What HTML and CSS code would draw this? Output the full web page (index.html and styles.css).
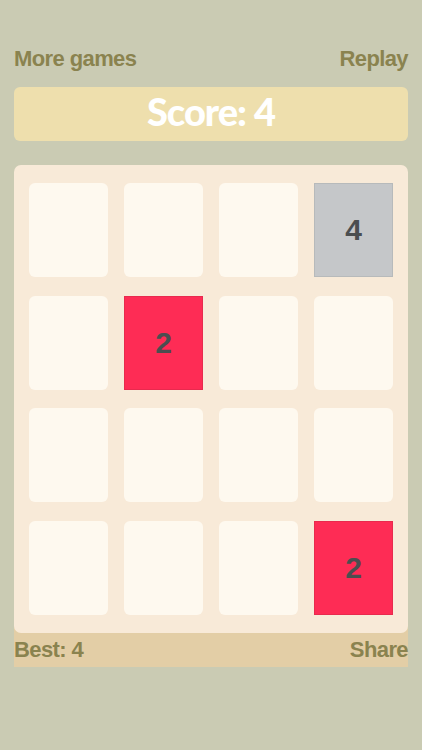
FILE: index.html
```html
<!DOCTYPE html>
<html lang="en">
<head>
    <meta charset="UTF-8">
    <meta name="viewport" content="width=device-width, initial-scale=1.0">
    <title>2048</title>
    <link rel="stylesheet" href="styles.css">
</head>
<body>
    <div class="top-bar">
        <a class="link" href="#">More games</a>
        <a class="link" href="#">Replay</a>
    </div>

    <div class="score">Score: 4</div>

    <div class="board">
        <div class="cell"></div>
        <div class="cell"></div>
        <div class="cell"></div>
        <div class="cell tile tile-4">4</div>

        <div class="cell"></div>
        <div class="cell tile tile-2">2</div>
        <div class="cell"></div>
        <div class="cell"></div>

        <div class="cell"></div>
        <div class="cell"></div>
        <div class="cell"></div>
        <div class="cell"></div>

        <div class="cell"></div>
        <div class="cell"></div>
        <div class="cell"></div>
        <div class="cell tile tile-2">2</div>
    </div>

    <div class="bottom-bar">
        <span class="link">Best: 4</span>
        <a class="link" href="#">Share</a>
    </div>
</body>
</html>
```

FILE: styles.css
```css
* {
    margin: 0;
    padding: 0;
    box-sizing: border-box;
}

body {
    font-family: 'Liberation Sans', Arial, sans-serif;
    background: #cacbb3;
    min-height: 100vh;
    padding: 46px 14px 0;
}

.top-bar,
.bottom-bar {
    display: flex;
    justify-content: space-between;
    align-items: center;
}

.top-bar {
    height: 26px;
    line-height: 26px;
}

.link {
    color: #8a834f;
    font-weight: bold;
    font-size: 22px;
    letter-spacing: -0.6px;
    text-decoration: none;
}

.score {
    margin-top: 15px;
    height: 54px;
    line-height: 48px;
    padding-bottom: 6px;
    background: #eedfad;
    border-radius: 6px;
    color: white;
    text-align: center;
    font-family: Lato, sans-serif;
    font-weight: 900;
    font-size: 38px;
    letter-spacing: -1px;
}

.board {
    position: relative;
    z-index: 1;
    margin-top: 24px;
    background: #f8ead8;
    border-radius: 7px;
    padding: 18px 15px 18px 15px;
    display: grid;
    grid-template-columns: repeat(4, 1fr);
    grid-template-rows: repeat(4, 94px);
    column-gap: 16px;
    row-gap: 18.7px;
}

.cell {
    background: #fef9ef;
    border-radius: 6px;
}

.tile {
    border-radius: 0;
    display: flex;
    align-items: center;
    justify-content: center;
    color: #4b4e50;
    font-weight: bold;
    font-size: 30px;
}

.tile-2 {
    background: #fe2c55;
    border: 1px solid #e82a4e;
}

.tile-4 {
    background: #c5c7c9;
    border: 1px solid #b7babb;
}

/* sits under the board's rounded bottom corners */
.bottom-bar {
    margin-top: -8px;
    padding-top: 8px;
    height: 42px;
    line-height: 34px;
    background: #e3cea6;
}
```
